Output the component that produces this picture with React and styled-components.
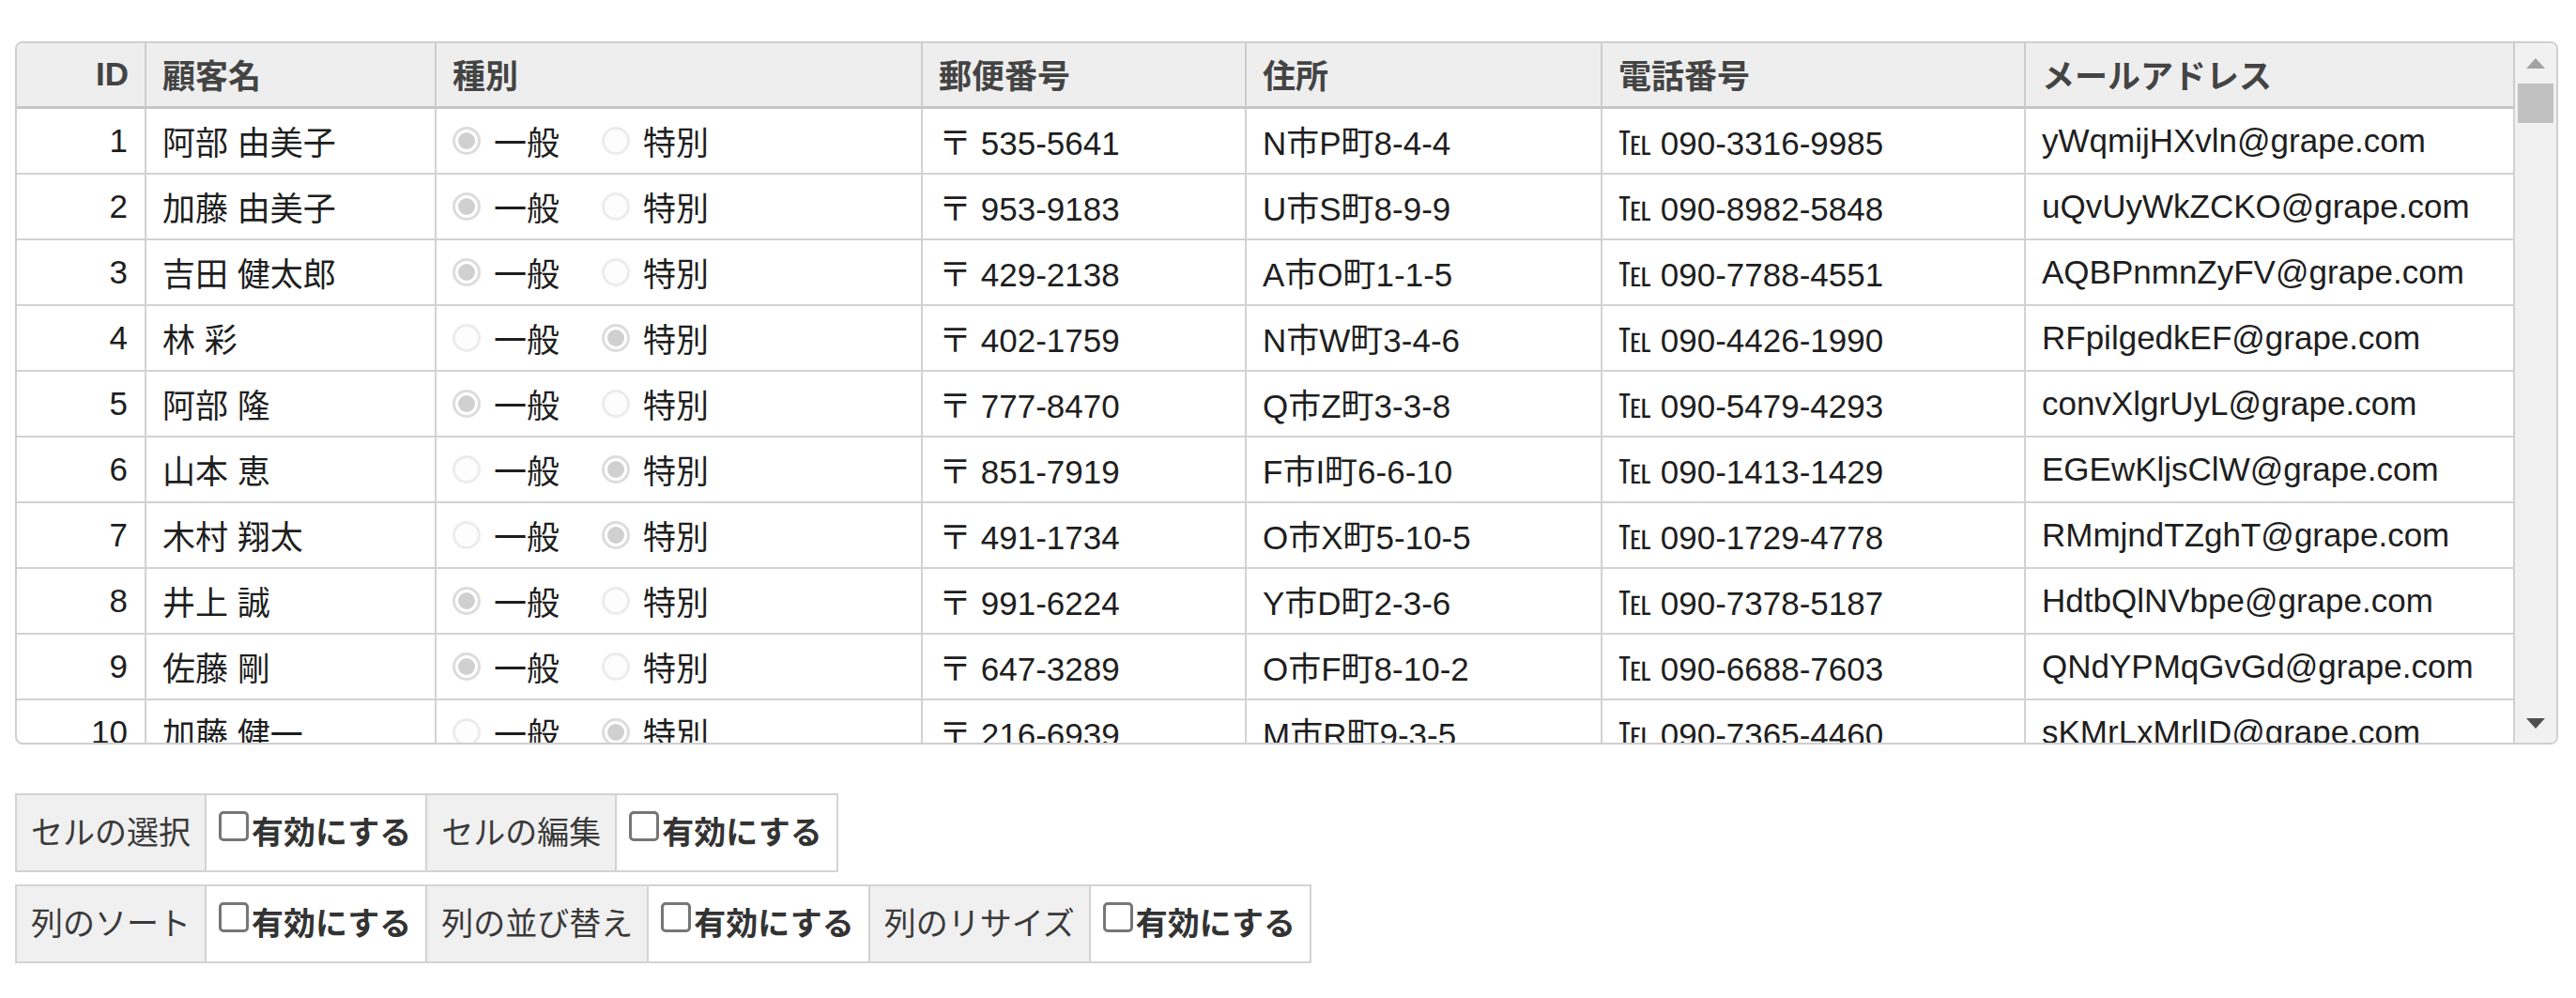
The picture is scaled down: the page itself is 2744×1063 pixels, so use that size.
import React from "react";
import styled, { createGlobalStyle } from "styled-components";

const GlobalStyle = createGlobalStyle`
  html, body { margin: 0; padding: 0; background: #fff; }
  body { font-family: "Liberation Sans", "Noto Sans CJK JP", sans-serif; }
  * { box-sizing: border-box; }
`;

const COLS = [138, 309, 518, 345, 379, 451, 521];

const Page = styled.div`
  padding: 44px 19px 0 16px;
  width: 2744px;
`;

const GridBox = styled.div`
  display: flex;
  border: 2px solid #cfcfcf;
  border-radius: 8px;
  overflow: hidden;
  height: 749px;
`;

const GridPane = styled.div`
  flex: none;
  display: grid;
  grid-template-columns: ${COLS.map((c) => c + "px").join(" ")};
  grid-auto-rows: 70px;
  align-content: start;
  height: 745px;
  overflow: hidden;
`;

const HeadCell = styled.div`
  display: flex;
  align-items: center;
  justify-content: ${(p) => (p.$right ? "flex-end" : "flex-start")};
  padding: 0 17px 2px 17px;
  background: #eeeeee;
  border-right: 2px solid #cccccc;
  border-bottom: 3px solid #c6c6c6;
  color: #444;
  font-weight: bold;
  font-size: 35px;
  white-space: nowrap;
`;

const Cell = styled.div`
  display: flex;
  align-items: center;
  justify-content: ${(p) => (p.$right ? "flex-end" : "flex-start")};
  padding: 0 18px 1px 17px;
  border-right: 2px solid #d2d2d2;
  border-bottom: 2px solid #d2d2d2;
  color: #1e1e1e;
  font-size: 35px;
  white-space: nowrap;
  overflow: hidden;
`;

const RadioGroup = styled.div`
  display: flex;
  align-items: center;
`;

const RadioItem = styled.label`
  display: flex;
  align-items: center;
  margin-right: 45px;
`;

const RadioMark = styled.span`
  position: relative;
  width: 30px;
  height: 30px;
  border-radius: 50%;
  margin-right: 14px;
  border: 3px solid ${(p) => (p.$checked ? "#dcdcdc" : "#ececec")};
  background: ${(p) => (p.$checked ? "#fff" : "#fdfdfd")};
  &::after {
    content: "";
    display: ${(p) => (p.$checked ? "block" : "none")};
    position: absolute;
    left: 3px;
    top: 3px;
    width: 18px;
    height: 18px;
    border-radius: 50%;
    background: #d0d0d0;
  }
`;

const ScrollBar = styled.div`
  flex: 1;
  display: flex;
  flex-direction: column;
  background: #f1f1f1;
`;

const ScrollButton = styled.div`
  height: 42px;
  display: flex;
  align-items: center;
  justify-content: center;
`;

const Thumb = styled.div`
  height: 42px;
  margin: 1px 3px 0 3px;
  background: #c1c1c1;
`;

const Track = styled.div`
  flex: 1;
`;

const Controls = styled.div`
  display: flex;
  flex-direction: column;
  align-items: flex-start;
  gap: 13px;
  margin-top: 52px;
  font-family: "Noto Sans CJK JP", sans-serif;
  font-size: 34px;
`;

const ControlRow = styled.div`
  display: flex;
  height: 84px;
  border: 2px solid #d3d3d3;
`;

const ControlLabel = styled.div`
  display: flex;
  align-items: center;
  padding: 0 15px 6px 15px;
  background: #f0f0f0;
  color: #3a3a3a;
  font-weight: 400;
  border-left: ${(p) => (p.$first ? "none" : "2px solid #d3d3d3")};
  white-space: nowrap;
`;

const ControlValue = styled.label`
  display: flex;
  align-items: center;
  padding: 0 15px 6px 13px;
  background: #fff;
  color: #333;
  font-weight: bold;
  border-left: 2px solid #d3d3d3;
  white-space: nowrap;
`;

const Check = styled.span`
  width: 32px;
  height: 32px;
  border: 3px solid #767676;
  border-radius: 5px;
  margin: 0 3px 8px 0;
  background: #fff;
`;

const rows = [
  [1, "阿部 由美子", 0, "535-5641", "N市P町8-4-4", "090-3316-9985", "yWqmijHXvln@grape.com"],
  [2, "加藤 由美子", 0, "953-9183", "U市S町8-9-9", "090-8982-5848", "uQvUyWkZCKO@grape.com"],
  [3, "吉田 健太郎", 0, "429-2138", "A市O町1-1-5", "090-7788-4551", "AQBPnmnZyFV@grape.com"],
  [4, "林 彩", 1, "402-1759", "N市W町3-4-6", "090-4426-1990", "RFpilgedkEF@grape.com"],
  [5, "阿部 隆", 0, "777-8470", "Q市Z町3-3-8", "090-5479-4293", "convXlgrUyL@grape.com"],
  [6, "山本 恵", 1, "851-7919", "F市I町6-6-10", "090-1413-1429", "EGEwKljsClW@grape.com"],
  [7, "木村 翔太", 1, "491-1734", "O市X町5-10-5", "090-1729-4778", "RMmjndTZghT@grape.com"],
  [8, "井上 誠", 0, "991-6224", "Y市D町2-3-6", "090-7378-5187", "HdtbQlNVbpe@grape.com"],
  [9, "佐藤 剛", 0, "647-3289", "O市F町8-10-2", "090-6688-7603", "QNdYPMqGvGd@grape.com"],
  [10, "加藤 健一", 1, "216-6939", "M市R町9-3-5", "090-7365-4460", "sKMrLxMrlID@grape.com"],
];

const headers = ["ID", "顧客名", "種別", "郵便番号", "住所", "電話番号", "メールアドレス"];

function Arrow({ down, color }) {
  return (
    <svg width="20" height="11" viewBox="0 0 20 11">
      {down ? (
        <polygon points="0,0 20,0 10,11" fill={color} />
      ) : (
        <polygon points="10,0 20,11 0,11" fill={color} />
      )}
    </svg>
  );
}

function Radio({ checked, label }) {
  return (
    <RadioItem>
      <RadioMark $checked={checked} />
      {label}
    </RadioItem>
  );
}

function Option({ label, first }) {
  return (
    <>
      <ControlLabel $first={first}>{label}</ControlLabel>
      <ControlValue>
        <Check />
        有効にする
      </ControlValue>
    </>
  );
}

export default function App() {
  return (
    <>
      <GlobalStyle />
      <Page>
        <GridBox>
          <GridPane>
            {headers.map((h, i) => (
              <HeadCell key={h} $right={i === 0}>
                {h}
              </HeadCell>
            ))}
            {rows.map((r) => (
              <React.Fragment key={r[0]}>
                <Cell $right>{r[0]}</Cell>
                <Cell>{r[1]}</Cell>
                <Cell>
                  <RadioGroup>
                    <Radio checked={r[2] === 0} label="一般" />
                    <Radio checked={r[2] === 1} label="特別" />
                  </RadioGroup>
                </Cell>
                <Cell>〒 {r[3]}</Cell>
                <Cell>{r[4]}</Cell>
                <Cell>℡ {r[5]}</Cell>
                <Cell>{r[6]}</Cell>
              </React.Fragment>
            ))}
          </GridPane>
          <ScrollBar>
            <ScrollButton>
              <Arrow color="#a3a3a3" />
            </ScrollButton>
            <Thumb />
            <Track />
            <ScrollButton>
              <Arrow down color="#505050" />
            </ScrollButton>
          </ScrollBar>
        </GridBox>
        <Controls>
          <ControlRow>
            <Option label="セルの選択" first />
            <Option label="セルの編集" />
          </ControlRow>
          <ControlRow>
            <Option label="列のソート" first />
            <Option label="列の並び替え" />
            <Option label="列のリサイズ" />
          </ControlRow>
        </Controls>
      </Page>
    </>
  );
}
